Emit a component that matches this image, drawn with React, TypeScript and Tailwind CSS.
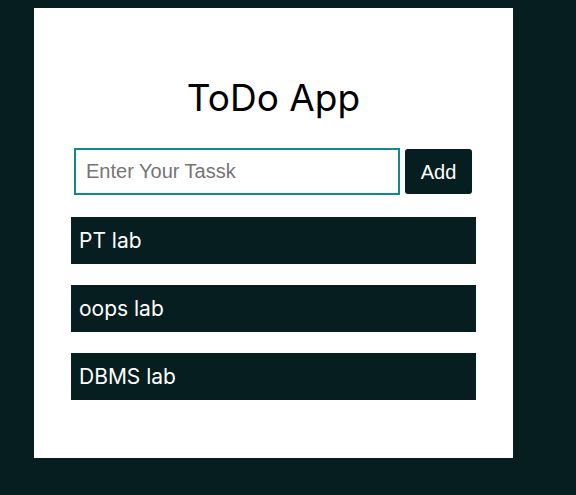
import React from "react";

export default function App() {
  const items = ["PT lab", "oops lab", "DBMS lab"];
  return (
    <div className="w-[576px] h-[495px] bg-[#061e1f] overflow-hidden pt-[8px] pl-[34px]">
      <div className="w-[479px] h-[450px] bg-white flex flex-col">
        <h1
          className="mt-[66px] text-center text-[37px] leading-[48px] text-black"
          style={{ fontFamily: "Inter, 'Noto Sans', sans-serif", fontWeight: 400 }}
        >
          ToDo App
        </h1>
        <div className="mt-[26px] ml-[40px] flex items-center gap-[5px]">
          <input
            placeholder="Enter Your Tassk"
            className="w-[326px] h-[47px] border-2 border-[#0b8b8b] px-[10px] text-[20px] placeholder:text-[#757575] outline-none"
            style={{ fontFamily: "'Liberation Sans', Arial, sans-serif" }}
          />
          <button
            className="w-[67px] h-[45px] bg-[#061e1f] text-white text-[20px] rounded-[3px]"
            style={{ fontFamily: "'Liberation Sans', Arial, sans-serif" }}
          >
            Add
          </button>
        </div>
        <div className="mt-[22px] ml-[37px] flex flex-col gap-[21px]">
          {items.map((t) => (
            <div
              key={t}
              className="w-[405px] h-[47px] bg-[#061e1f] text-white text-[21px] flex items-center pl-[8px]"
              style={{ fontFamily: "Inter, 'Noto Sans', sans-serif" }}
            >
              {t}
            </div>
          ))}
        </div>
      </div>
    </div>
  );
}
